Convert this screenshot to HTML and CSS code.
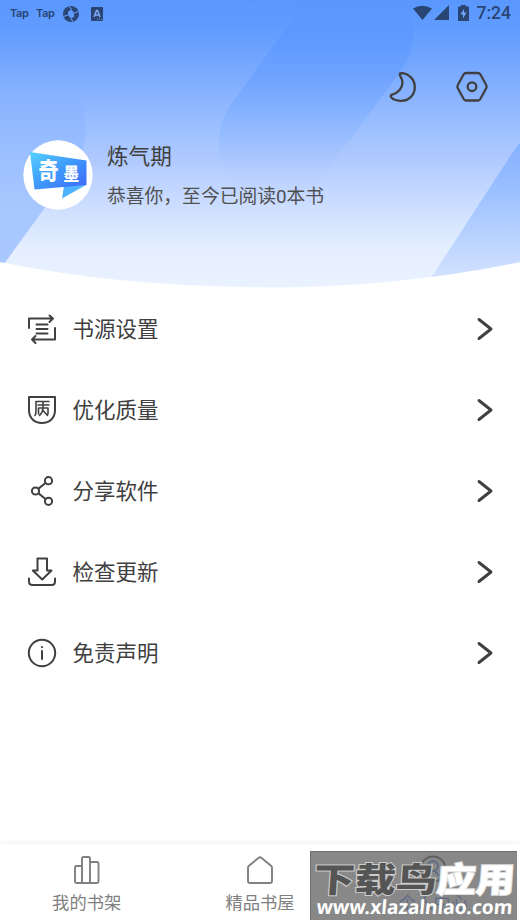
FILE: index.html
```html
<!DOCTYPE html>
<html lang="zh-CN">
<head>
<meta charset="utf-8">
<title>个人中心</title>
<link rel="stylesheet" href="styles.css">
</head>
<body>
<div class="screen">
  <header class="hero">
    <svg class="hero-art" viewBox="0 0 520 290" aria-hidden="true">
      <defs>
        <linearGradient id="sky" x1="0" y1="0" x2="0" y2="288" gradientUnits="userSpaceOnUse">
          <stop offset="0" stop-color="#5997ff"/><stop offset=".1" stop-color="#619cff"/>
          <stop offset=".2" stop-color="#71a5ff"/><stop offset=".35" stop-color="#8cb5ff"/>
          <stop offset=".45" stop-color="#9dc0ff"/>
          <stop offset=".55" stop-color="#afc9ff"/><stop offset=".7" stop-color="#cadcff"/>
          <stop offset=".86" stop-color="#e4eeff"/><stop offset="1" stop-color="#eaf2ff"/>
        </linearGradient>
        <linearGradient id="band" x1="0" y1="0" x2="0" y2="190" gradientUnits="userSpaceOnUse">
          <stop offset="0" stop-color="#5997ff"/><stop offset=".2" stop-color="#5e99ff"/>
          <stop offset=".42" stop-color="#70a4ff"/><stop offset=".58" stop-color="#84b1ff"/>
          <stop offset=".72" stop-color="#97bdff"/><stop offset=".85" stop-color="#abc8ff" stop-opacity=".8"/>
          <stop offset="1" stop-color="#c0d5ff" stop-opacity="0"/>
        </linearGradient>
        <linearGradient id="left" x1="0" y1="80" x2="0" y2="262" gradientUnits="userSpaceOnUse">
          <stop offset="0" stop-color="#80afff" stop-opacity="0"/><stop offset=".18" stop-color="#88b3ff" stop-opacity=".5"/>
          <stop offset=".35" stop-color="#98bdff"/><stop offset=".65" stop-color="#a6c6ff"/><stop offset="1" stop-color="#a9c8ff"/>
        </linearGradient>
        <linearGradient id="right" x1="0" y1="144" x2="0" y2="277" gradientUnits="userSpaceOnUse">
          <stop offset="0" stop-color="#84b0ff"/><stop offset=".35" stop-color="#9bc0ff"/><stop offset="1" stop-color="#d2e2ff"/>
        </linearGradient>
        <clipPath id="bowl"><path d="M0 0H520V262Q400 287 275 287.5Q120 287 0 262Z"/></clipPath>
      </defs>
      <g clip-path="url(#bowl)">
        <path fill="url(#sky)" d="M0 0H520V290H0Z"/>
        <path fill="url(#band)" d="M305 0L292 20L232 103Q219 121 219 143Q220 170 236 190H312L398 75Q414 53 413 28L410 0Z"/>
        <path fill="url(#left)" d="M0 80H76Q86 108 86 136Q82 161 62 184L4 264L0 264Z"/>
        <path fill="url(#right)" d="M520 143Q514 150 509 158L431 278H520Z"/>
      </g>
    </svg>
    <div class="status">
      <div class="status-left">
        <span class="tap">Tap</span><span class="tap">Tap</span>
        <svg class="swirl" viewBox="0 0 16 16"><circle cx="8" cy="8" r="8" fill="#294574"/><path d="M8.500 3.200L5 5.800L5 9L8 12.800L11.200 10.400L11 7Z" fill="#6099fb"/><path d="M8.500 3.200L6 .500M5 9L.500 10.500M8 12.800L10 15.500M11 7L15.500 5.500" stroke="#6099fb" stroke-width="1.100"/><path d="M6.500 8H9.500" stroke="#6099fb"/></svg>
        <svg class="app" viewBox="0 0 12 14"><rect width="12" height="14" rx="1" fill="#294574"/><path d="M3 10L5.500 3.500H6.500L9 10M4 8H8" fill="none" stroke="#80aaf2" stroke-width="1.500"/><path d="M6 12H11" stroke="#6791d8" stroke-dasharray="1 1"/></svg>
      </div>
      <div class="status-right">
        <svg class="radio" viewBox="0 0 36 16"><path fill="#294574" d="M0 3.500Q9-2 19 3.500L9.500 15ZM21 15L36 0V15Z"/></svg>
        <svg class="battery" viewBox="0 0 11 16"><path fill="#294574" d="M0 2.500Q0 1.500 1 1.500H3V0H8V1.500H10Q11 1.500 11 2.500V16H0Z"/><path d="M6 4L2.500 9.500H5V13.500L8.500 7.500H6Z" fill="#75a6ff"/></svg>
        <span class="time">7:24</span>
      </div>
    </div>
    <div class="tools">
      <svg class="moon" viewBox="0 0 28 32"><path d="M12.200 2.200C20 2.500 25.800 8.500 25.800 16C25.800 24 20 29.800 12.500 29.800C8.500 29.800 4.500 28.500 2.200 26.300C1 25 2 23.800 3.500 23.500C9 22 13.500 17 13.500 11.500C13.500 8.800 12.500 7 11.200 4.800C10.400 3.200 10.700 2.200 12.200 2.200Z"/></svg>
      <svg class="settings" viewBox="0 0 32 32"><path d="M10 2H22Q23.500 2 24.300 3.300L30.200 14Q31 15.700 30.200 17.300L24.300 28Q23.500 29.500 22 29.500H10Q8.500 29.500 7.700 28L1.800 17.300Q1 15.700 1.800 14L7.700 3.300Q8.500 2 10 2Z"/><circle cx="16" cy="15.700" r="4.300"/></svg>
    </div>
    <section class="profile">
      <svg class="avatar" viewBox="0 0 70 70">
        <defs><linearGradient id="flag" x1="0" y1="0" x2="1" y2="1"><stop stop-color="#55d0ff"/><stop offset=".5" stop-color="#3f99fb"/><stop offset="1" stop-color="#3b66fb"/></linearGradient></defs>
        <circle cx="35" cy="35" r="34.700" fill="#fff"/><path d="M41 46L39 58.500L63 45Z" fill="#4eb2ff"/><path fill="url(#flag)" d="M7 12L63.500 20.500V45L11.500 49.500Z"/>
        <text x="15.500" y="39" class="logo-large" textLength="20" lengthAdjust="spacingAndGlyphs">奇</text><text x="40.500" y="39.800" class="logo-small" textLength="15.500" lengthAdjust="spacingAndGlyphs">墨</text>
      </svg>
      <div class="profile-text"><h1>炼气期</h1><p>恭喜你，至今已阅读<span class="count">0</span>本书</p></div>
    </section>
  </header>
  <main class="menu">
    <a class="row"><svg class="icon" viewBox="0 0 30 30"><path d="M2 14V4.500H26M22.500 1.500L26 4.500L22.500 8M28 14V25.500H5M8.500 22L5 25.500L8.500 29M9.500 10.500H20.500M9.500 15H20.500M9.500 19.500H20.500"/></svg><span>书源设置</span><svg class="chevron" viewBox="0 0 16 24"><path d="M2 2.500L14 12L2 21.500"/></svg></a>
    <a class="row"><svg class="icon" viewBox="0 0 30 30"><path d="M2 2H28V15C28 23 22.500 28 15 28C7.500 28 2 23 2 15Z"/><path class="fine" d="M22 6.500H9V16Q9 18.500 8 20.500M11 10H22M16 7V13M11.500 19V13H21V19M16 13Q16 17 12.500 20.500M16.500 16L20.500 20.500"/></svg><span>优化质量</span><svg class="chevron" viewBox="0 0 16 24"><path d="M2 2.500L14 12L2 21.500"/></svg></a>
    <a class="row"><svg class="icon" viewBox="0 0 30 30"><circle cx="8.500" cy="15" r="3.600"/><circle cx="21.500" cy="4.700" r="3.600"/><circle cx="21.500" cy="25.300" r="3.600"/><path d="M11.500 12.600L18.500 7M11.500 17.400L18.500 23"/></svg><span>分享软件</span><svg class="chevron" viewBox="0 0 16 24"><path d="M2 2.500L14 12L2 21.500"/></svg></a>
    <a class="row"><svg class="icon" viewBox="0 0 30 30"><path d="M10.500 1.500H20V13.500H24.500L15.200 22.500L5.800 13.500H10.500ZM2 21.500V24.500Q2 28 5.500 28H24.500Q28 28 28 24.500V21.500"/></svg><span>检查更新</span><svg class="chevron" viewBox="0 0 16 24"><path d="M2 2.500L14 12L2 21.500"/></svg></a>
    <a class="row"><svg class="icon" viewBox="0 0 30 30"><circle cx="15" cy="15" r="13.200"/><path d="M15 13V21M15 9V9.200"/></svg><span>免责声明</span><svg class="chevron" viewBox="0 0 16 24"><path d="M2 2.500L14 12L2 21.500"/></svg></a>
  </main>
  <nav class="tabs">
    <a class="tab"><svg viewBox="0 0 30 30"><path d="M10 28V3.500Q10 2 11.500 2H16.500Q18 2 18 3.500V28M10 11H4.500Q3 11 3 12.500V26.500Q3 28 4.500 28H25Q26.500 28 26.500 26.500V8.500Q26.500 7 25 7H18"/></svg><span>我的书架</span></a>
    <a class="tab"><svg viewBox="0 0 30 30"><path d="M3 12.500Q3 11.500 4 10.700L13.700 2.700Q15 1.700 16.300 2.700L26 10.700Q27 11.500 27 12.500V26Q27 28 25 28H5Q3 28 3 26Z"/></svg><span>精品书屋</span></a>
    <a class="tab active"><svg viewBox="0 0 30 30"><circle cx="15" cy="14" r="12.500"/><circle class="lens" cx="15" cy="11" r="5"/><path class="lens" d="M17 16L21 21"/></svg><span>个人中心</span></a>
    <svg class="watermark" viewBox="0 0 207 70">
      <path d="M0 0H207V69H0Z" fill="#6c6c6c" fill-opacity=".81"/><path d="M.5 69V.5H207" fill="none" stroke="#707070"/>
      <text class="mark-dark" transform="translate(0 41) skewX(-4)" x="3" y="0" textLength="123" lengthAdjust="spacingAndGlyphs">下载鸟</text>
      <text class="mark-light" transform="translate(0 41) skewX(-4)" x="126" y="0" textLength="78" lengthAdjust="spacingAndGlyphs">应用</text>
      <text class="mark-url" transform="translate(0 63) skewX(-5)" x="6" y="0" textLength="196" lengthAdjust="spacingAndGlyphs">www.xlazalnlao.com</text>
    </svg>
  </nav>
</div>
</body>
</html>
```
FILE: styles.css
```css
* { box-sizing: border-box; }
body { margin: 0; background: #fff; font-family: "Noto Sans CJK SC", sans-serif; color: #404040; }
.screen { width: 520px; height: 924px; display: flex; flex-direction: column; overflow: hidden; }
svg { display: block; flex: none; overflow: visible; }
.hero { position: relative; height: 288px; flex: none; }
.hero-art { position: absolute; inset: 0; width: 520px; height: 290px; z-index: -1; }
.status { height: 27px; display: flex; justify-content: space-between; padding: 0 9px 0 10px; color: #294574; }
.status-left, .status-right { display: flex; align-items: center; }
.tap { width: 26px; font: 600 11px/24px Inter, sans-serif; letter-spacing: -.4px; height: 26px; }
.swirl { width: 16px; height: 16px; margin: 0 12px 0 1px; }
.app { width: 12px; height: 14px; }
.radio { width: 36px; height: 16px; margin: -1px 9px 0 0; }
.battery { width: 11px; height: 16px; margin-right: 8px; margin-top: -2px; }
.time { font: 500 17.5px/27px Roboto, sans-serif; }
.tools { height: 32px; margin-top: 44px; display: flex; justify-content: flex-end; padding-right: 32px; gap: 39px; }
.tools svg { fill: none; stroke: #404040; stroke-width: 2.3; stroke-linejoin: round; }
.moon { width: 28px; height: 32px; }
.settings { width: 32px; height: 32px; }
.profile { display: flex; margin: 37px 0 0 23px; gap: 14px; }
.avatar { width: 70px; height: 70px; }
.avatar text { fill: #fff; font-weight: 900; }
.logo-large { font-size: 23px; }
.logo-small { font-size: 17px; }
.profile-text h1 { margin: -1px 0 0; font-size: 21.6px; line-height: 32px; font-weight: 400; }
.profile-text p { margin: 10px 0 0; font-size: 18.8px; line-height: 28px; color: #505050; white-space: nowrap; }
.count { font-family: Roboto, sans-serif; }
.menu { flex: 1; }
.row { height: 81px; display: flex; align-items: center; padding: 0 27px 0 27px; font-size: 21.5px; line-height: 32px; }
.row span { margin-top: -2px; }
.icon { width: 30px; height: 30px; margin-right: 15.5px; fill: none; stroke: #404040; stroke-width: 2; stroke-linecap: round; stroke-linejoin: round; }
.icon .fine { stroke-width: 1.6; }
.chevron { width: 16px; height: 24px; margin-left: auto; fill: none; stroke: #404040; stroke-width: 2.9; stroke-linecap: round; stroke-linejoin: round; }
.tabs { position: relative; height: 80px; display: grid; grid-template-columns: repeat(3, 1fr); background: #fff; box-shadow: 0 -1px 5px #00000012; }
.tab { display: flex; flex-direction: column; align-items: center; padding-top: 11px; font-size: 17.3px; color: #808080; line-height: 26px; }
.tab svg { width: 30px; height: 30px; margin-bottom: 4px; fill: none; stroke: #808080; stroke-width: 1.9; stroke-linejoin: round; }
.active { color: #1e6cf4; }
.active svg { stroke: #202020; }
.active .lens { stroke: #1e6cf4; }
.watermark { position: absolute; left: 310px; top: 7px; width: 207px; height: 70px; }
.mark-dark, .mark-light { font-size: 34px; font-weight: 900; paint-order: stroke; stroke-width: 2px; }
.mark-dark { fill: #555; stroke: #ccc; }
.mark-light { fill: #fff; stroke: #ddd; }
.mark-url { font: 700 19.5px "Noto Sans", sans-serif; fill: #fff; }
```
